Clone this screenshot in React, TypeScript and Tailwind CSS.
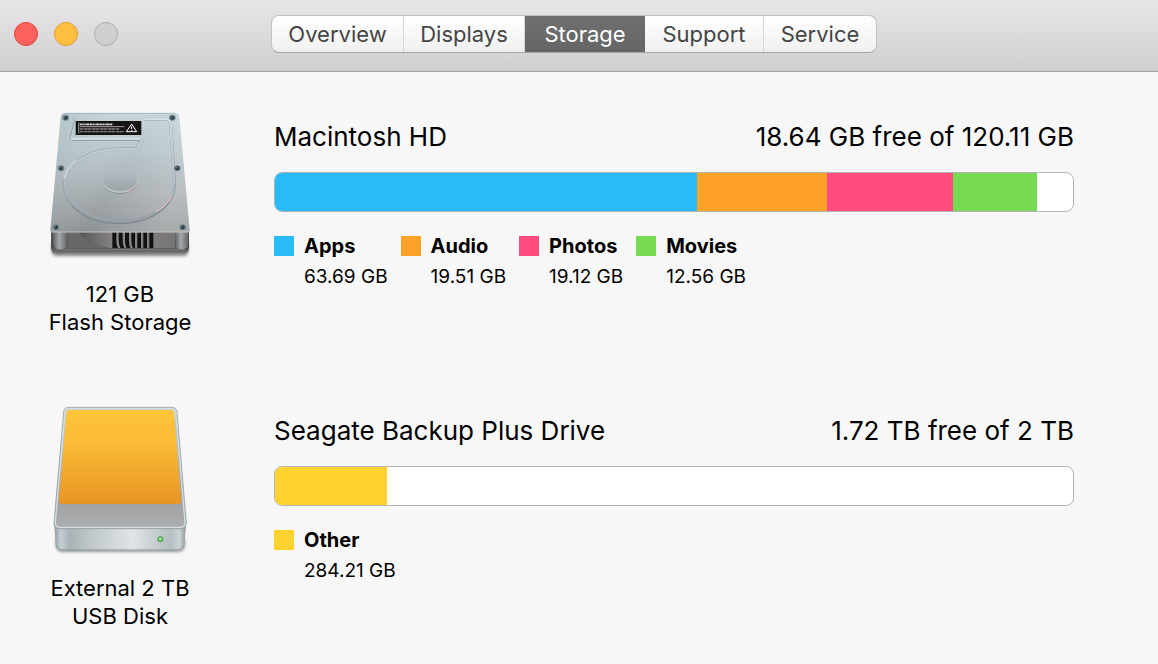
import React, { useState } from 'react';

interface Category {
  name: string;
  size: string;
  share: number;
  color: string;
}

interface Drive {
  name: string;
  free: string;
  caption: string[];
  icon: React.FC;
  categories: Category[];
}

const InternalDiskIcon: React.FC = () => (
  <svg width="170" height="170" viewBox="0 0 510 510" aria-hidden="true">
    <defs>
      <linearGradient id="plate" x1="0" y1="0" x2="0" y2="1">
        <stop offset="0" stopColor="#c5d6db" />
        <stop offset="0.3" stopColor="#b9c7cc" />
        <stop offset="0.65" stopColor="#a6adb1" />
        <stop offset="1" stopColor="#8c9193" />
      </linearGradient>
      <linearGradient id="plateShine" x1="0" y1="0" x2="1" y2="0.5">
        <stop offset="0" stopColor="#7c959c" stopOpacity="0.35" />
        <stop offset="0.6" stopColor="#ffffff" stopOpacity="0" />
        <stop offset="1" stopColor="#ffffff" stopOpacity="0.22" />
      </linearGradient>
      <linearGradient id="hub" x1="0" y1="0" x2="0" y2="1">
        <stop offset="0" stopColor="#b3bfc4" />
        <stop offset="1" stopColor="#9ca3a7" />
      </linearGradient>
      <linearGradient id="chassis" x1="0" y1="0" x2="0" y2="1">
        <stop offset="0" stopColor="#58595b" />
        <stop offset="0.7" stopColor="#4a4a4a" />
        <stop offset="1" stopColor="#777777" />
      </linearGradient>
      <linearGradient id="pillar" x1="0" y1="0" x2="1" y2="0">
        <stop offset="0" stopColor="#606468" />
        <stop offset="0.45" stopColor="#a5a8ab" />
        <stop offset="1" stopColor="#66696c" />
      </linearGradient>
      <linearGradient id="motor" x1="0" y1="0" x2="1" y2="0">
        <stop offset="0" stopColor="#555555" />
        <stop offset="0.4" stopColor="#8b8888" />
        <stop offset="1" stopColor="#777575" />
      </linearGradient>
      <linearGradient id="ridge" x1="0" y1="0" x2="0" y2="1">
        <stop offset="0" stopColor="#d3dee2" />
        <stop offset="0.6" stopColor="#b4bec4" />
        <stop offset="1" stopColor="#9a9fa8" />
      </linearGradient>
      <filter id="diskShadow" x="-10%" y="-50%" width="120%" height="200%">
        <feGaussianBlur stdDeviation="5" />
      </filter>
    </defs>
    <path d="M50 430H460V452Q460 468 444 468H66Q50 468 50 452Z" fill="#000" opacity="0.45" filter="url(#diskShadow)" />
    <path d="M48 390H462V444Q462 460 446 460H64Q48 460 48 444Z" fill="url(#chassis)" />
    <path d="M128 396H420V444H224Q150 432 128 396Z" fill="url(#motor)" />
    <path d="M98 396H130Q158 434 224 444H98Z" fill="#686868" />
    <g fill="#111">
      <path d="M232 397h12v22q0 18 6 26h-18zM251 397h12v22q0 18 6 26h-12q-6-8-6-24zM270 397h12v22q0 18 5 26h-12q-5-8-5-24zM289 397h11v48h-6q-5-10-5-24zM307 397h11v48h-11zM325 397h11v48h-11zM343 397h12v48h-12z" />
    </g>
    <path d="M54 396H96V440Q76 456 56 440Z" fill="url(#pillar)" />
    <path d="M420 396H459V440Q440 456 422 440Z" fill="url(#pillar)" />
    <path d="M62 448H448" stroke="#8e8e8e" strokeWidth="2" />
    <path d="M90 39H420Q432 39 433 50L464 390Q464 397 456 397H54Q46 397 46 390L77 51Q78 39 90 39Z" fill="url(#plate)" />
    <path d="M90 39H420Q432 39 433 50L464 390Q464 397 456 397H54Q46 397 46 390L77 51Q78 39 90 39Z" fill="url(#plateShine)" />
    <path d="M49 396H461" stroke="#d8c9c0" strokeWidth="2.5" />
    <path d="M90 40H420" stroke="#91a9b1" strokeWidth="2" />
    {/* label recess */}
    <path d="M120 56L106 110Q104 121 116 121H321" fill="none" stroke="#8d9da4" strokeWidth="3" />
    <path d="M107 116H326" stroke="#d3e0e4" strokeWidth="6" />
    <path d="M122 57L109 113" stroke="#c3d1d6" strokeWidth="3" />
    {/* platter outline */}
    <path d="M328 58H392Q406 58 407 72L418 244C424 318 347 365 253 365C157 365 89 315 89 255C91 190 164 146 258 146H299Q307 146 310 138L324 116" fill="none" stroke="#929da3" strokeWidth="9" strokeLinejoin="round" />
    <path d="M328 57H392Q406 57 407 71L417 244C423 315 347 361 253 361C159 361 90 312 90 254C92 190 164 147 258 147H299Q307 147 310 139L324 116" fill="none" stroke="url(#ridge)" strokeWidth="7" strokeLinejoin="round" />
    <path d="M112 318Q161 372 253 371Q357 370 404 305" fill="none" stroke="#7a8188" strokeWidth="3" />
    <path d="M362 336Q397 316 409 287" fill="none" stroke="#d7bebf" strokeWidth="4" />
    <path d="M88 235Q94 204 123 180" fill="none" stroke="#e3eaed" strokeWidth="3" />
    <ellipse cx="255" cy="246" rx="54" ry="35" fill="#7f878c" />
    <ellipse cx="255" cy="243" rx="55" ry="36" fill="#b9c2c6" />
    <ellipse cx="255" cy="240" rx="52" ry="33" fill="url(#hub)" />
    <path d="M280 274Q303 264 308 250" fill="none" stroke="#d3aaa9" strokeWidth="3" />
    {/* warning label */}
    <rect x="122" y="63" width="197" height="42" fill="#151515" />
    <path d="M131 67V101" stroke="#c9c9c9" strokeWidth="2" />
    <path d="M134 73H233" stroke="#d0d0d0" strokeWidth="5" strokeDasharray="8 1 6 2 12 1" />
    <path d="M134 80H268" stroke="#eeeeee" strokeWidth="2" />
    <path d="M134 87H252M134 95H266" stroke="#8a8a8a" strokeWidth="4" strokeDasharray="7 1 4 2 9 1" />
    <path d="M290 72L305 95H274Z" fill="none" stroke="#fff" strokeWidth="3" strokeLinejoin="round" />
    <path d="M290 79V87M290 90V93" stroke="#fff" strokeWidth="3" />
    {[[92, 53], [412, 53], [78, 205], [427, 205], [63, 382], [443, 382]].map(([x, y]) => (
      <g key={`${x}-${y}`}>
        <ellipse cx={x} cy={y} rx="10" ry="9" fill="#75868d" />
        <circle cx={x} cy={y} r="6" fill="#283d47" />
        <circle cx={x - 2} cy={y - 2} r="2" fill="#7c98a4" />
      </g>
    ))}
  </svg>
);

const ExternalDiskIcon: React.FC = () => (
  <svg width="170" height="170" viewBox="0 -3 510 510" aria-hidden="true">
    <defs>
      <linearGradient id="cover" x1="0" y1="0" x2="0" y2="1">
        <stop offset="0" stopColor="#ffc43a" />
        <stop offset="0.35" stopColor="#fabb36" />
        <stop offset="1" stopColor="#e89523" />
      </linearGradient>
      <linearGradient id="top" x1="0" y1="0" x2="0" y2="1">
        <stop offset="0" stopColor="#c5d0d3" />
        <stop offset="0.78" stopColor="#a0a1a2" />
        <stop offset="1" stopColor="#adaeaf" />
      </linearGradient>
      <linearGradient id="front" x1="0" y1="0" x2="1" y2="0">
        <stop offset="0" stopColor="#8d979c" />
        <stop offset="0.05" stopColor="#c4cdd1" />
        <stop offset="0.12" stopColor="#a9b2b6" />
        <stop offset="0.3" stopColor="#c2cacd" />
        <stop offset="0.6" stopColor="#dfe4e6" />
        <stop offset="0.88" stopColor="#b5bec2" />
        <stop offset="0.95" stopColor="#cad2d5" />
        <stop offset="1" stopColor="#899499" />
      </linearGradient>
      <filter id="externalShadow" x="-10%" y="-50%" width="120%" height="200%">
        <feGaussianBlur stdDeviation="4" />
      </filter>
    </defs>
    <path d="M62 430H450V450Q448 471 430 471H80Q64 471 62 450Z" fill="#000" opacity="0.4" filter="url(#externalShadow)" />
    <path d="M57 380H454L448 450Q446 467 430 467H80Q64 467 62 450Z" fill="url(#front)" />
    <path d="M65 453Q68 465 82 465H428Q442 465 445 453" fill="none" stroke="#889196" strokeWidth="3" />
    <path d="M100 37H411Q424 37 426 50L454 382Q455 401 438 401H73Q56 401 57 382L86 50Q88 37 100 37Z" fill="url(#top)" stroke="#8f999d" strokeWidth="2" />
    <path d="M101 41H410Q420 41 422 51L450 382Q450 397 437 397H74Q61 397 61 382L90 51Q92 41 101 41Z" fill="none" stroke="#d3dfe3" strokeWidth="4" />
    <path d="M104 45H407Q416 45 417 54L438 316Q439 327 429 327H81Q71 327 72 316L94 54Q95 45 104 45Z" fill="url(#cover)" />
    <circle cx="376" cy="433" r="9" fill="#78857d" />
    <circle cx="376" cy="433" r="7" fill="#43c344" />
    <circle cx="376" cy="432" r="4" fill="#a4fa97" />
  </svg>
);

const drives: Drive[] = [
  {
    name: 'Macintosh HD',
    free: '18.64 GB free of 120.11 GB',
    caption: ['121 GB', 'Flash Storage'],
    icon: InternalDiskIcon,
    categories: [
      { name: 'Apps', size: '63.69 GB', share: 52.9, color: '#28bbf8' },
      { name: 'Audio', size: '19.51 GB', share: 16.3, color: '#ffa228' },
      { name: 'Photos', size: '19.12 GB', share: 15.8, color: '#ff4b7f' },
      { name: 'Movies', size: '12.56 GB', share: 10.5, color: '#76db52' }
    ]
  },
  {
    name: 'Seagate Backup Plus Drive',
    free: '1.72 TB free of 2 TB',
    caption: ['External 2 TB', 'USB Disk'],
    icon: ExternalDiskIcon,
    categories: [{ name: 'Other', size: '284.21 GB', share: 14, color: '#ffd22f' }]
  }
];

const tabs = [
  { name: 'Overview', width: 'w-[132px]' },
  { name: 'Displays', width: 'w-[121px]' },
  { name: 'Storage', width: 'w-[120px]' },
  { name: 'Support', width: 'w-[119px]' },
  { name: 'Service', width: 'w-[112px]' }
];

const DriveRow: React.FC<{ drive: Drive }> = ({ drive }) => {
  const Icon = drive.icon;

  return (
    <section className="grid grid-cols-[240px_1fr] gap-x-[34px]">
      <div className="flex flex-col items-center">
        <Icon />
        <p className="mt-2.5 text-center text-[22px] leading-7">
          {drive.caption[0]}
          <br />
          {drive.caption[1]}
        </p>
      </div>

      <div className="pt-[21px]">
        <div className="flex justify-between text-[26px] leading-8">
          <h2>{drive.name}</h2>
          <p>{drive.free}</p>
        </div>

        {/* Usage bar */}
        <div className="mt-[19px] flex h-10 overflow-hidden rounded-lg border border-[#b4b4b4] bg-white">
          {drive.categories.map((c) => (
            <div key={c.name} style={{ width: `${c.share}%`, backgroundColor: c.color }}></div>
          ))}
        </div>

        {/* Legend */}
        <ul className="mt-6 flex gap-[13px]">
          {drive.categories.map((c) => (
            <li key={c.name} className="flex gap-2.5">
              <span className="size-5 shrink-0" style={{ backgroundColor: c.color }}></span>
              <div>
                <p className="text-[20px] leading-5 font-bold">{c.name}</p>
                <p className="mt-2 text-[19px] leading-[26px]">{c.size}</p>
              </div>
            </li>
          ))}
        </ul>
      </div>
    </section>
  );
};

const App: React.FC = () => {
  const [activeTab, setActiveTab] = useState('Storage');

  return (
    <div className="min-h-screen bg-[#f7f7f7] font-['Inter',sans-serif] text-black">
      <header className="relative flex h-[72px] justify-center border-b border-[#a4a3a4] bg-linear-to-b from-[#e8e6e9] to-[#d0ced1] pt-[15px] pr-2.5">
        <div className="absolute top-[22px] left-3.5 flex gap-4">
          <button aria-label="Close" className="size-6 rounded-full border border-[#e0443f] bg-[#fc615c]"></button>
          <button aria-label="Minimize" className="size-6 rounded-full border border-[#df9f30] bg-[#fdbe41]"></button>
          <button aria-label="Zoom" disabled className="size-6 rounded-full border border-[#adadad] bg-[#cfcfcf]"></button>
        </div>

        <nav className="flex h-[38px] overflow-hidden rounded-lg border border-[#c3c1c4] border-b-[#a5a3a6] bg-linear-to-b from-white to-[#f0f0f0]">
          {tabs.map((tab) => (
            <button
              key={tab.name}
              onClick={() => setActiveTab(tab.name)}
              className={`${tab.width} text-[22px] leading-7 ${
                activeTab === tab.name
                  ? 'bg-linear-to-b from-[#6f6f6f] to-[#656565] text-white'
                  : 'border-r border-[#d6d6d6] text-[#454545] last:border-r-0'
              }`}
            >
              {tab.name}
            </button>
          ))}
        </nav>
      </header>

      <main className="flex flex-col gap-[58px] pt-7 pr-[84px]">
        {drives.map((drive) => (
          <DriveRow key={drive.name} drive={drive} />
        ))}
      </main>
    </div>
  );
};

export default App;
